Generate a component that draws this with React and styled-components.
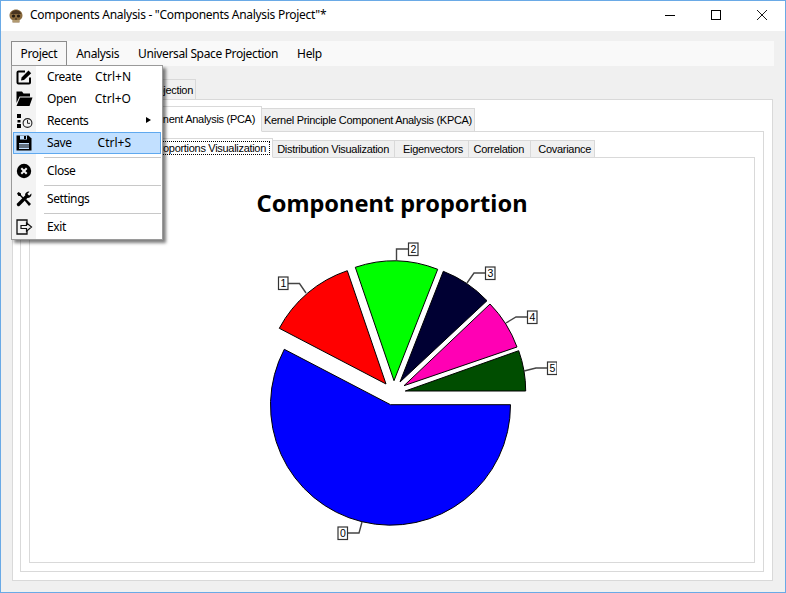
import React from 'react';
import styled, { createGlobalStyle } from 'styled-components';

const GlobalStyle = createGlobalStyle`
  html, body { margin: 0; padding: 0; background: #f0f0f0; }
  body { font-family: "Noto Sans", "Open Sans", sans-serif; color: #000; }
`;

const slices = [
  { fill: '#ff0000', d: 'M386 384 L279.3 328.3 A120 120 0 0 1 347.3 270.7 Z' },
  { fill: '#00ff00', d: 'M394 380.7 L355.3 267.3 A120 120 0 0 1 437.7 269.3 Z' },
  { fill: '#000033', d: 'M400 382 L443.3 271.3 A120 120 0 0 1 487 300.7 Z' },
  { fill: '#ff00b4', d: 'M404 385.7 L490 304 A120 120 0 0 1 517 347 Z' },
  { fill: '#004d00', d: 'M405.3 391 L518.7 350.7 A120 120 0 0 1 525.7 391 Z' },
  { fill: '#0000ff', d: 'M390.5 404.7 L510.5 404.7 A120 120 0 1 1 284.3 349.3 Z' },
];

const labels = [
  { text: '0', x: 338, y: 527, line: '347.5,533 359,533 362,522' },
  { text: '1', x: 278.5, y: 277, line: '288,283.5 299.5,283.5 306,293' },
  { text: '2', x: 408.5, y: 243, line: '408,249 396.5,249 396.5,261' },
  { text: '3', x: 485.5, y: 267, line: '485,273 474,273 467,283' },
  { text: '4', x: 527.5, y: 311, line: '527,317 516,317 506,323' },
  { text: '5', x: 547.5, y: 362, line: '547,368 536,368 524,371' },
];

const AppIcon = () => (
  <svg width="14" height="14" viewBox="0 0 14 14">
    <path d="M7 0.5C10.5 0.5 13.5 3 13.5 6.5C13.5 9 12 10.5 10.5 11V13.5H3.5V11C2 10.5 0.5 9 0.5 6.5C0.5 3 3.5 0.5 7 0.5Z" fill="#8a6b3f" />
    <path d="M3 2.5L7 1L11 2.5L12 5H2Z" fill="#4a3520" />
    <circle cx="4.5" cy="7" r="1.6" fill="#241a10" />
    <circle cx="9.5" cy="7" r="1.6" fill="#241a10" />
    <path d="M7 8.5L8 10.5H6Z" fill="#2e2114" />
    <path d="M4 11.5H10V12.5H4Z" fill="#d8c8a0" />
  </svg>
);

const CreateIcon = () => (
  <svg width="16" height="16" viewBox="0 0 16 16">
    <path d="M9 2.5H2.5A1 1 0 0 0 1.5 3.5V13.5A1 1 0 0 0 2.5 14.5H13A1 1 0 0 0 14 13.5V8.5" fill="none" stroke="#000" strokeWidth="2" />
    <path d="M5 11.5L5.6 8.5L12.5 1.5L15.2 4.2L8 11Z" fill="#000" />
  </svg>
);

const OpenIcon = () => (
  <svg width="17" height="16" viewBox="0 0 17 16">
    <path d="M0.5 0.5H6L7.5 2.5H14V5.5H3.5L0.5 12Z" fill="#000" />
    <path d="M4 6.5H16.5L13.5 15H0.5Z" fill="#000" />
  </svg>
);

const RecentsIcon = () => (
  <svg width="17" height="16" viewBox="0 0 17 16">
    <rect x="1" y="1" width="4" height="4" fill="#000" />
    <rect x="1.5" y="7" width="3" height="2.5" fill="#000" />
    <rect x="1" y="11" width="4" height="4" fill="#000" />
    <circle cx="11.5" cy="10" r="4.4" fill="none" stroke="#222" strokeWidth="1.1" />
    <path d="M11.5 7V10.3H14" fill="none" stroke="#222" strokeWidth="1" />
  </svg>
);

const SaveIcon = () => (
  <svg width="16" height="16" viewBox="0 0 16 16">
    <path d="M0.5 0.5H12.5L15.5 3.5V15.5H0.5Z" fill="#000" />
    <rect x="4" y="0.5" width="7" height="4" fill="#c2e0ff" />
    <rect x="8" y="1" width="2" height="3" fill="#000" />
    <rect x="3" y="8" width="10" height="6" fill="#c2e0ff" />
    <path d="M3 10H13M3 12H13" stroke="#000" strokeWidth="1" />
  </svg>
);

const CloseIcon = () => (
  <svg width="16" height="16" viewBox="0 0 16 16">
    <circle cx="8" cy="8" r="7.2" fill="#000" />
    <path d="M5.3 5.3L10.7 10.7M10.7 5.3L5.3 10.7" stroke="#f3f3f3" strokeWidth="2" />
  </svg>
);

const SettingsIcon = () => (
  <svg width="16" height="16" viewBox="0 0 16 16">
    <path d="M2.5 13.5L11 5" stroke="#000" strokeWidth="3.4" strokeLinecap="round" />
    <path d="M9 3.5A3.5 3.5 0 0 1 13.5 0.8L11.2 3L13 4.8L15.3 2.6A3.5 3.5 0 0 1 12 7Z" fill="#000" />
    <path d="M1 2.5L2.5 1L5 2.5V4L8 7L7 8L4 5H2.5Z" fill="#000" />
    <path d="M8.5 9.5L10 8L15 13L13 15Z" fill="#000" />
  </svg>
);

const ExitIcon = () => (
  <svg width="17" height="16" viewBox="0 0 17 16">
    <path d="M11 4V1H1V15H11V12" fill="none" stroke="#111" strokeWidth="1.3" />
    <path d="M5 6.5H10.5V3.8L15.5 8L10.5 12.2V9.5H5Z" fill="#f3f3f3" stroke="#111" strokeWidth="1.2" />
  </svg>
);

const menuItems = [
  { label: 'Create', shortcut: 'Ctrl+N', icon: <CreateIcon /> },
  { label: 'Open', shortcut: 'Ctrl+O', icon: <OpenIcon /> },
  { label: 'Recents', arrow: true, icon: <RecentsIcon /> },
  { label: 'Save', shortcut: 'Ctrl+S', icon: <SaveIcon />, hover: true },
  { separator: true },
  { label: 'Close', icon: <CloseIcon /> },
  { separator: true },
  { label: 'Settings', icon: <SettingsIcon /> },
  { separator: true },
  { label: 'Exit', icon: <ExitIcon /> },
];

const App = () => (
  <Window>
    <GlobalStyle />
    <TitleBar>
      <AppIcon />
      <TitleText>Components Analysis - "Components Analysis Project"*</TitleText>
      <WindowButtons>
        <WindowButton>
          <svg width="12" height="12" viewBox="0 0 12 12"><path d="M1 6.5H11" stroke="#000" /></svg>
        </WindowButton>
        <WindowButton>
          <svg width="12" height="12" viewBox="0 0 12 12"><rect x="1.5" y="1.5" width="9" height="9" fill="none" stroke="#000" /></svg>
        </WindowButton>
        <WindowButton>
          <svg width="12" height="12" viewBox="0 0 12 12"><path d="M1 1L11 11M11 1L1 11" stroke="#000" strokeWidth="0.9" /></svg>
        </WindowButton>
      </WindowButtons>
    </TitleBar>
    <Body>
      <MenuBar>
        <MenuEntry $open>
          Project
          <Dropdown>
            {menuItems.map((item, id) => (
              item.separator ? <Separator key={id} /> : (
                <DropdownItem key={id} $hover={item.hover}>
                  <ItemIcon>{item.icon}</ItemIcon>
                  <ItemLabel>{item.label}</ItemLabel>
                  <Shortcut>{item.shortcut}</Shortcut>
                  {item.arrow && <SubArrow />}
                </DropdownItem>
              )
            ))}
          </Dropdown>
        </MenuEntry>
        <MenuEntry>Analysis</MenuEntry>
        <MenuEntry>Universal Space Projection</MenuEntry>
        <MenuEntry>Help</MenuEntry>
      </MenuBar>

      <TabRow $height={22}>
        <Tab $width={185}>Universal Space Projection</Tab>
      </TabRow>
      <Panel $left={7}>
        <TabRow $height={25}>
          <Tab $width={242} $active $pad={6}>Principle Component Analysis (PCA)</Tab>
          <Tab $width={214}>Kernel Principle Component Analysis (KPCA)</Tab>
        </TabRow>
        <Panel $left={8}>
          <TabRow $height={19}>
            <Tab $width={244} $active $focus><FocusLabel>Proportions Visualization</FocusLabel></Tab>
            <Tab $width={123} $pad={5}>Distribution Visualization</Tab>
            <Tab $width={75} $pad={5}>Eigenvectors</Tab>
            <Tab $width={63} $pad={6}>Correlation</Tab>
            <Tab $width={65} $pad={3}>Covariance</Tab>
          </TabRow>
          <ChartPanel>
            <ChartTitle>Component proportion</ChartTitle>
            <PieChart viewBox="227 236 330 310">
              {slices.map((slice, id) => (
                <path key={id} d={slice.d} fill={slice.fill} stroke="#000" strokeWidth="1" />
              ))}
              {labels.map((label) => (
                <g key={label.text}>
                  <polyline points={label.line} fill="none" stroke="#444" strokeWidth="1.4" />
                  <rect x={label.x} y={label.y} width="9.5" height="12.5" fill="#fff" stroke="#333" strokeWidth="1.2" />
                  <LabelText x={label.x + 4.8} y={label.y + 10}>{label.text}</LabelText>
                </g>
              ))}
            </PieChart>
          </ChartPanel>
        </Panel>
      </Panel>
    </Body>
  </Window>
);
export default App;

const Window = styled.div`
  width: 786px;
  height: 593px;
  box-sizing: border-box;
  border: 1px solid #6aaae6;
  display: flex;
  flex-direction: column;
  overflow: hidden;
  background: #f0f0f0;
`;
const TitleBar = styled.div`
  height: 30px;
  flex: none;
  display: flex;
  align-items: center;
  padding-left: 8px;
  background: #fff;
`;
const TitleText = styled.span`
  margin: 0 0 3px 7px;
  font-size: 12px;
  letter-spacing: -0.29px;
`;
const WindowButtons = styled.div`
  margin-left: auto;
  align-self: flex-start;
  display: flex;
`;
const WindowButton = styled.div`
  width: 46px;
  height: 28px;
  display: flex;
  align-items: center;
  justify-content: center;
`;
const Body = styled.div`
  flex: 1;
  display: flex;
  flex-direction: column;
  padding: 10px 12px 11px 11px;
  min-height: 0;
`;
const MenuBar = styled.div`
  height: 25px;
  flex: none;
  margin: 0 -1px 11px -1px;
  background: #f9f9f9;
  display: flex;
  font-size: 12px;
  letter-spacing: -0.35px;
`;
const MenuEntry = styled.div`
  position: relative;
  display: flex;
  align-items: center;
  padding: 0 8.5px 2px;
  box-sizing: border-box;
  border: 1px solid ${(p) => (p.$open ? '#8c8c8c' : 'transparent')};
  border-bottom: none;
  background: ${(p) => (p.$open ? '#f7f7f7' : 'transparent')};
`;
const Dropdown = styled.div`
  position: absolute;
  top: 23px;
  left: -1px;
  z-index: 5;
  width: 152px;
  box-sizing: border-box;
  padding-bottom: 1px;
  border: 1px solid #9a9a9a;
  background: linear-gradient(90deg, #f3f3f3 24px, #fff 24px);
  box-shadow: 3px 3px 3px rgba(0, 0, 0, 0.5);
`;
const DropdownItem = styled.div`
  height: 22px;
  box-sizing: border-box;
  margin: 0 1px;
  padding: 0 29px 2px 0;
  display: flex;
  align-items: center;
  border: 1px solid ${(p) => (p.$hover ? '#5fa9ef' : 'transparent')};
  background: ${(p) => (p.$hover ? '#c2e0ff' : 'transparent')};
  position: relative;
`;
const ItemIcon = styled.span`
  width: 21px;
  margin: 2px 0 0 2px;
  display: flex;
  align-items: center;
`;
const ItemLabel = styled.span`
  margin-left: 10px;
  letter-spacing: -0.4px;
`;
const Shortcut = styled.span`
  margin-left: auto;
  letter-spacing: 0;
`;
const SubArrow = styled.span`
  position: absolute;
  right: 9px;
  top: 6px;
  border-left: 5px solid #000;
  border-top: 3.5px solid transparent;
  border-bottom: 3.5px solid transparent;
`;
const Separator = styled.div`
  height: 1px;
  margin: 3px 1px 2px 32px;
  background: #c8c8c8;
`;
const TabRow = styled.div`
  height: ${(p) => p.$height}px;
  flex: none;
  display: flex;
  align-items: flex-end;
`;
const Tab = styled.div`
  width: ${(p) => p.$width}px;
  height: ${(p) => (p.$active ? 'calc(100% + 1px)' : 'calc(100% - 2px)')};
  margin-bottom: ${(p) => (p.$active ? '-1px' : '0')};
  box-sizing: border-box;
  position: relative;
  z-index: ${(p) => (p.$active ? 1 : 0)};
  display: flex;
  align-items: center;
  justify-content: flex-end;
  padding: ${(p) => (p.$focus ? '2px' : `0 ${p.$pad || 2}px 0 0`)};
  font-family: "Liberation Sans", Arial, sans-serif;
  font-size: 11px;
  letter-spacing: -0.3px;
  white-space: nowrap;
  border: 1px solid #d9d9d9;
  border-bottom: ${(p) => (p.$active ? '1px solid #fff' : 'none')};
  margin-left: ${(p) => (p.$active ? '0' : '-1px')};
  background: ${(p) => (p.$active ? '#fff' : '#f0f0f0')};
`;
const FocusLabel = styled.span`
  flex: 1;
  height: 100%;
  box-sizing: border-box;
  display: flex;
  align-items: center;
  justify-content: flex-end;
  padding-right: 4px;
  outline: 1px dotted #000;
  outline-offset: -1px;
`;
const Panel = styled.div`
  flex: 1;
  min-height: 0;
  display: flex;
  flex-direction: column;
  box-sizing: border-box;
  padding: 6px 8px 8px ${(p) => p.$left}px;
  border: 1px solid #d9d9d9;
  background: #fff;
`;
const ChartPanel = styled.div`
  flex: 1;
  min-height: 0;
  display: flex;
  flex-direction: column;
  align-items: center;
  box-sizing: border-box;
  border: 1px solid #d9d9d9;
  background: #fff;
`;
const ChartTitle = styled.div`
  height: 78px;
  flex: none;
  box-sizing: border-box;
  padding-top: 28px;
  font-family: "Noto Sans", "Open Sans", sans-serif;
  font-weight: bold;
  font-size: 23.6px;
  line-height: 34px;
  white-space: nowrap;
`;
const PieChart = styled.svg`
  width: 330px;
  height: 310px;
  flex: none;
`;
const LabelText = styled.text`
  font-family: "Liberation Sans", Arial, sans-serif;
  font-size: 10.5px;
  text-anchor: middle;
  fill: #000;
`;
